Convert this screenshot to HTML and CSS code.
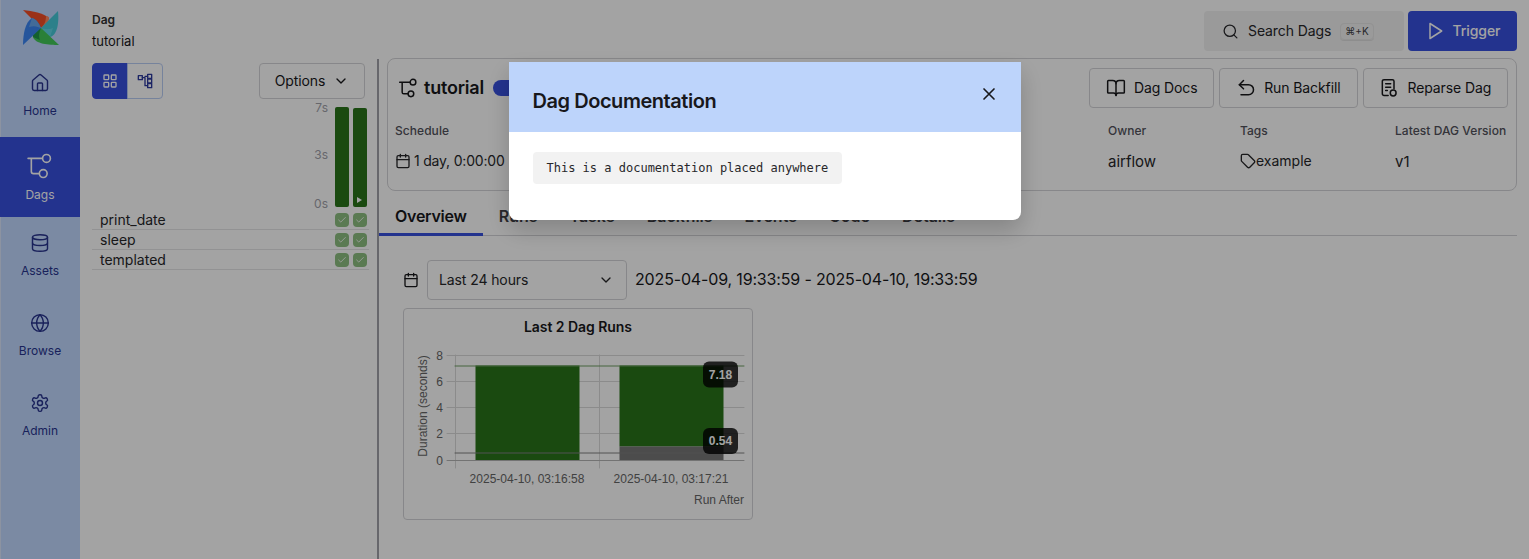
FILE: index.html
```html
<!DOCTYPE html>
<html lang="en">
<head>
  <meta charset="UTF-8">
  <meta name="viewport" content="width=device-width, initial-scale=1.0">
  <title>tutorial - Dag</title>
  <link rel="stylesheet" href="styles.css">
</head>
<body>

<div class="app">
  <nav class="sidebar">
    <div class="logo">
      <svg width="36" height="36" viewBox="0 0 36 36">
        <path fill="#f34e27" d="M18 18 0 0C10 1 20 3 26 8c-1 4-4 7-8 10z"/>
        <path fill="#ff8a63" d="M18 18c3-3 5-6 5-12 2 0 3 1 3 2 0 4-3 7-8 10z"/>
        <path fill="#45c8d8" d="M18 18 35 1c1 10 0 24-8 26-3-1-7-5-9-9z"/>
        <path fill="#5fd5e6" d="M18 18c3 1 7 2 12 0l-3 9c-4 0-7-4-9-9z"/>
        <path fill="#42c858" d="M18 18 36 35c-10 0-24-1-26-8 0-4 4-7 8-9z"/>
        <path fill="#20964a" d="M18 18c-1 3-3 7-1 12l-7-3c-1-4 3-7 8-9z"/>
        <path fill="#3a86f5" d="M18 18 0 35C0 25 2 12 9 8c4 1 7 5 9 10z"/>
        <path fill="#6aa8ee" d="M18 18c-3-1-6-3-12-1l3-9c4 1 7 5 9 10z"/>
      </svg>
    </div>
    <a class="nav-item">
      <svg class="nav-icon" viewBox="0 0 24 24"><path d="M15 21v-8a1 1 0 0 0-1-1h-4a1 1 0 0 0-1 1v8"/><path d="M3 10a2 2 0 0 1 .709-1.528l7-5.999a2 2 0 0 1 2.582 0l7 5.999A2 2 0 0 1 21 10v9a2 2 0 0 1-2 2H5a2 2 0 0 1-2-2z"/></svg>
      <span>Home</span>
    </a>
    <a class="nav-item active">
      <svg class="nav-icon dag-icon" viewBox="0 0 24 24"><path d="M1 5h13M4 5v12a2 2 0 0 0 2 2h5"/><circle cx="18" cy="5" r="3.6"/><circle cx="15" cy="19" r="3.6"/></svg>
      <span>Dags</span>
    </a>
    <a class="nav-item">
      <svg class="nav-icon" viewBox="0 0 24 24"><ellipse cx="12" cy="5" rx="9" ry="3"/><path d="M3 5V19A9 3 0 0 0 21 19V5"/><path d="M3 12A9 3 0 0 0 21 12"/></svg>
      <span>Assets</span>
    </a>
    <a class="nav-item">
      <svg class="nav-icon" viewBox="0 0 24 24"><circle cx="12" cy="12" r="10"/><path d="M12 2a14.5 14.5 0 0 0 0 20 14.5 14.5 0 0 0 0-20"/><path d="M2 12h20"/></svg>
      <span>Browse</span>
    </a>
    <a class="nav-item">
      <svg class="nav-icon" viewBox="0 0 24 24"><path d="M12.22 2h-.44a2 2 0 0 0-2 2v.18a2 2 0 0 1-1 1.73l-.43.25a2 2 0 0 1-2 0l-.15-.08a2 2 0 0 0-2.73.73l-.22.38a2 2 0 0 0 .73 2.73l.15.1a2 2 0 0 1 1 1.72v.51a2 2 0 0 1-1 1.74l-.15.09a2 2 0 0 0-.73 2.73l.22.38a2 2 0 0 0 2.73.73l.15-.08a2 2 0 0 1 2 0l.43.25a2 2 0 0 1 1 1.73V20a2 2 0 0 0 2 2h.44a2 2 0 0 0 2-2v-.18a2 2 0 0 1 1-1.73l.43-.25a2 2 0 0 1 2 0l.15.08a2 2 0 0 0 2.73-.73l.22-.39a2 2 0 0 0-.73-2.73l-.15-.08a2 2 0 0 1-1-1.74v-.5a2 2 0 0 1 1-1.74l.15-.09a2 2 0 0 0 .73-2.73l-.22-.38a2 2 0 0 0-2.73-.73l-.15.08a2 2 0 0 1-2 0l-.43-.25a2 2 0 0 1-1-1.73V4a2 2 0 0 0-2-2z"/><circle cx="12" cy="12" r="3"/></svg>
      <span>Admin</span>
    </a>
  </nav>

  <div class="main">
    <header class="topbar">
      <div class="crumbs">
        <div class="crumb-label">Dag</div>
        <div class="crumb-name">tutorial</div>
      </div>
      <div class="top-actions">
        <div class="search">
          <svg class="icon" viewBox="0 0 24 24"><circle cx="11" cy="11" r="8"/><path d="m21 21-4.3-4.3"/></svg>
          <span class="lift">Search Dags</span>
          <kbd class="kbd">⌘+K</kbd>
        </div>
        <button class="trigger">
          <svg class="icon" viewBox="0 0 24 24"><polygon points="6 3 20 12 6 21 6 3"/></svg>
          <span class="lift">Trigger</span>
        </button>
      </div>
    </header>

    <div class="content">
      <aside class="grid-panel">
        <div class="panel-tools">
          <div class="toggle">
            <span class="toggle-btn on">
              <svg class="icon-sm" viewBox="0 0 24 24"><rect width="7" height="7" x="3" y="3" rx="1"/><rect width="7" height="7" x="14" y="3" rx="1"/><rect width="7" height="7" x="14" y="14" rx="1"/><rect width="7" height="7" x="3" y="14" rx="1"/></svg>
            </span>
            <span class="toggle-btn">
              <svg class="icon-sm" viewBox="0 0 24 24"><rect width="6" height="6" x="2" y="4"/><rect width="6" height="6" x="16" y="2"/><rect width="6" height="6" x="16" y="9" /><rect width="6" height="6" x="16" y="16"/><path d="M8 7h4v12h4M12 5h4"/></svg>
            </span>
          </div>
          <button class="options"><span class="lift">Options</span>
            <svg class="icon-sm" viewBox="0 0 24 24"><path d="m6 9 6 6 6-6"/></svg>
          </button>
        </div>
        <div class="duration">
          <div class="duration-scale"><span>7s</span><span class="mid-tick">3s</span><span>0s</span></div>
          <div class="duration-bar"></div>
          <div class="duration-bar second"><i class="play-mark"></i></div>
        </div>
        <ul class="task-list">
          <li class="task-row"><span class="task-name">print_date</span><span class="check"><svg viewBox="0 0 24 24"><path d="M20 6 9 17l-5-5"/></svg></span><span class="check"><svg viewBox="0 0 24 24"><path d="M20 6 9 17l-5-5"/></svg></span></li>
          <li class="task-row"><span class="task-name">sleep</span><span class="check"><svg viewBox="0 0 24 24"><path d="M20 6 9 17l-5-5"/></svg></span><span class="check"><svg viewBox="0 0 24 24"><path d="M20 6 9 17l-5-5"/></svg></span></li>
          <li class="task-row"><span class="task-name">templated</span><span class="check"><svg viewBox="0 0 24 24"><path d="M20 6 9 17l-5-5"/></svg></span><span class="check"><svg viewBox="0 0 24 24"><path d="M20 6 9 17l-5-5"/></svg></span></li>
        </ul>
      </aside>

      <div class="divider"></div>

      <section class="detail">
        <div class="dag-card">
          <div class="dag-head">
            <div class="dag-title">
              <svg class="icon" viewBox="0 0 24 24"><path d="M2 5h12M5 5v12a2 2 0 0 0 2 2h5"/><circle cx="18" cy="5" r="3.4"/><circle cx="15.500" cy="19" r="3.4"/></svg>
              <h1>tutorial</h1>
              <span class="pill"></span>
            </div>
            <div class="dag-actions">
              <button class="btn btn-docs">
                <svg class="icon" viewBox="0 0 24 24"><path d="M12 7v14"/><path d="M3 18a1 1 0 0 1-1-1V4a1 1 0 0 1 1-1h5a4 4 0 0 1 4 4 4 4 0 0 1 4-4h5a1 1 0 0 1 1 1v13a1 1 0 0 1-1 1h-6a3 3 0 0 0-3 3 3 3 0 0 0-3-3z"/></svg>
                <span class="lift">Dag Docs</span>
              </button>
              <button class="btn btn-backfill">
                <svg class="icon" viewBox="0 0 24 24"><path d="M9 3 4 8l5 5"/><path d="M4 8h11a5.500 5.500 0 0 1 0 12H6"/></svg>
                <span class="lift">Run Backfill</span>
              </button>
              <button class="btn btn-reparse">
                <svg class="icon" viewBox="0 0 24 24"><path d="M11 21H6a2 2 0 0 1-2-2V4a2 2 0 0 1 2-2h10a2 2 0 0 1 2 2v9"/><path d="M8 7h6M8 11h6M8 15h2"/><circle cx="17" cy="18" r="3.500"/></svg>
                <span class="lift">Reparse Dag</span>
              </button>
            </div>
          </div>
          <div class="stats">
            <div class="stat">
              <div class="stat-label">Schedule</div>
              <div class="stat-value schedule"><svg class="icon-sm" viewBox="0 0 24 24"><rect x="3" y="4" width="18" height="18" rx="2"/><path d="M16 2v4M8 2v4M3 10h18"/></svg>1 day, 0:00:00</div>
            </div>
            <div class="stat">
              <div class="stat-label">Owner</div>
              <div class="stat-value">airflow</div>
            </div>
            <div class="stat">
              <div class="stat-label">Tags</div>
              <div class="stat-value tags"><svg class="icon-sm" viewBox="0 0 24 24"><path d="M12.586 2.586A2 2 0 0 0 11.172 2H4a2 2 0 0 0-2 2v7.172a2 2 0 0 0 .586 1.414l8.704 8.704a2.426 2.426 0 0 0 3.420 0l6.580-6.580a2.426 2.426 0 0 0 0-3.420z"/></svg>example</div>
            </div>
            <div class="stat">
              <div class="stat-label">Latest DAG Version</div>
              <div class="stat-value">v1</div>
            </div>
          </div>
        </div>

        <div class="tabs">
          <span class="tab active">Overview</span>
          <span class="tab">Runs</span>
          <span class="tab">Tasks</span>
          <span class="tab">Backfills</span>
          <span class="tab">Events</span>
          <span class="tab">Code</span>
          <span class="tab">Details</span>
        </div>

        <div class="overview">
          <div class="range-row">
            <svg class="icon-sm" viewBox="0 0 24 24"><rect x="3" y="4" width="18" height="18" rx="2"/><path d="M16 2v4M8 2v4M3 10h18"/></svg>
            <div class="range-select"><span class="lift">Last 24 hours</span>
              <svg class="icon-sm" viewBox="0 0 24 24"><path d="m6 9 6 6 6-6"/></svg>
            </div>
            <span class="range-text lift">2025-04-09, 19:33:59 - 2025-04-10, 19:33:59</span>
          </div>

          <div class="chart-card">
            <svg class="chart" width="350" height="212" viewBox="403 308 350 212">
              <text class="chart-title" x="578" y="332">Last 2 Dag Runs</text>
              <g class="grid">
                <path d="M447 355.500H744M447 381.500H744M447 407.500H744M447 433.500H744"/>
                <path d="M455.500 355V468M599.500 355V468"/>
              </g>
              <rect class="bar" x="475.500" y="365.500" width="104" height="95"/>
              <rect class="bar" x="619.500" y="365.500" width="104" height="81"/>
              <rect class="bar-queued" x="619.500" y="446.500" width="104" height="14"/>
              <path class="axis" d="M447 460.500H744"/>
              <path class="mean-run" d="M455 366H744"/>
              <path class="mean-queue" d="M455 453H744"/>
              <g class="tick">
                <text x="443" y="360">8</text>
                <text x="443" y="386">6</text>
                <text x="443" y="412">4</text>
                <text x="443" y="438">2</text>
                <text x="443" y="465">0</text>
              </g>
              <text class="axis-label" transform="translate(427 406) rotate(-90)">Duration (seconds)</text>
              <text class="date-tick" x="527" y="483">2025-04-10, 03:16:58</text>
              <text class="date-tick" x="671" y="483">2025-04-10, 03:17:21</text>
              <text class="run-after" x="744" y="504">Run After</text>
              <rect class="badge" x="703" y="361.500" width="35" height="26" rx="6"/>
              <text class="badge-text" x="720.500" y="379">7.18</text>
              <rect class="badge" x="703" y="428" width="35" height="26" rx="6"/>
              <text class="badge-text" x="720.500" y="445">0.54</text>
            </svg>
          </div>
        </div>
      </section>
    </div>
  </div>
</div>

<div class="overlay">
  <div class="modal">
    <div class="modal-head">
      <h2>Dag Documentation</h2>
      <svg class="modal-close" viewBox="0 0 24 24"><path d="M18 6 6 18M6 6l12 12"/></svg>
    </div>
    <div class="modal-body">
      <code class="doc-code">This is a documentation placed anywhere</code>
    </div>
  </div>
</div>

</body>
</html>
```

FILE: styles.css
```css
* { box-sizing: border-box; }
html, body { height: 100%; }
body { margin: 0; font-family: Inter, "Liberation Sans", sans-serif; font-size: 14px; color: #18181b; background-color: #ffffff; overflow: hidden; }
ul { list-style: none; margin: 0; padding: 0; }
h1, h2 { margin: 0; }
button { font-family: inherit; cursor: pointer; }
svg { fill: none; stroke: currentColor; stroke-width: 2; stroke-linecap: round; stroke-linejoin: round; flex-shrink: 0; }
.icon { width: 20px; height: 20px; stroke-width: 1.8; }
.icon-sm { width: 16px; height: 16px; }
.lift { padding-bottom: 2px; letter-spacing: -0.1px; }

.app { display: flex; height: 559px; }

/* sidebar */
.sidebar { width: 80px; flex-shrink: 0; background-color: #c0d8ff; border-left: 1px solid #dbe6fc; color: #28348f; display: flex; flex-direction: column; }
.logo { height: 57px; display: flex; padding: 10px 0 0 22px; }
.logo svg { stroke: none; }
.nav-item { height: 80px; display: flex; flex-direction: column; align-items: center; gap: 10px; padding-top: 16px; font-size: 12px; margin-left: -1px; }
.nav-item.active { background-color: #3851df; color: #ffffff; gap: 8px; }
.nav-icon { width: 20px; height: 20px; stroke-width: 1.7; }
.dag-icon { width: 26px; height: 26px; stroke-width: 1.5; }

/* top */
.main { flex: 1; min-width: 0; display: flex; flex-direction: column; padding: 0 12px; }
.topbar { height: 58px; display: flex; justify-content: space-between; padding-top: 11px; }
.crumbs { padding-top: 1px; }
.crumb-label { font-size: 12px; font-weight: 600; color: #333333; line-height: 16px; }
.crumb-name { font-size: 13px; margin-top: 3px; line-height: 20px; }
.top-actions { display: flex; gap: 4px; height: 40px; }
.search { width: 200px; background-color: #f1f1f1; border-radius: 4px; display: flex; align-items: center; padding-left: 18px; gap: 9px; color: #27272a; }
.search .icon { width: 17px; height: 17px; }
.kbd { font-family: Inter, "Liberation Sans", sans-serif; font-size: 10px; border: 1px solid #e4e4e4; border-radius: 4px; padding: 0 4px; height: 17px; line-height: 15px; color: #3f3f46; box-shadow: 0 1px 0 #dddddd; }
.trigger { width: 109px; border: none; border-radius: 4px; background-color: #3851df; color: #ffffff; font-size: 14px; font-weight: 500; display: flex; align-items: center; justify-content: center; gap: 8px; padding: 0; }

.content { flex: 1; display: flex; min-height: 0; }

/* grid panel */
.grid-panel { width: 285px; flex-shrink: 0; padding-top: 5px; }
.panel-tools { display: flex; justify-content: space-between; padding-right: 12px; }
.toggle { display: flex; height: 36px; }
.toggle-btn { width: 36px; display: flex; align-items: center; justify-content: center; border: 1px solid #b9cdf5; color: #2d3a9e; border-radius: 0 4px 4px 0; margin-left: -1px; }
.toggle-btn.on { background-color: #3851df; border-color: #3851df; color: #ffffff; border-radius: 4px 0 0 4px; margin-left: 0; }
.options { width: 106px; height: 36px; border: 1px solid #d4d4d8; border-radius: 4px; background: none; font-size: 14px; color: #18181b; display: flex; align-items: center; justify-content: center; gap: 8px; padding: 0; }
.duration { display: flex; justify-content: flex-end; height: 100px; margin-top: 8px; padding-right: 10px; gap: 4px; }
.duration-scale { display: flex; flex-direction: column; justify-content: space-between; align-items: flex-end; font-size: 12px; color: #a1a1aa; margin-right: 3px; line-height: 14px; margin-top: -6px; height: 110px; }
.mid-tick { margin-bottom: 3px; }
.duration-bar { width: 14px; height: 100px; background-color: #29741a; border-radius: 2px; position: relative; }
.duration-bar.second { height: 99px; margin-top: 1px; }
.play-mark { position: absolute; left: 4px; bottom: 4px; width: 0; height: 0; border-left: 5px solid #ffffff; border-top: 3px solid transparent; border-bottom: 3px solid transparent; }
.task-list { margin-top: 3px; margin-right: 8px; }
.task-row { height: 20px; display: flex; align-items: center; gap: 4px; padding: 0 2px 0 8px; border-bottom: 1px solid #e4e4e7; }
.task-name { flex: 1; font-size: 14px; color: #27272a; }
.check { width: 14px; height: 14px; border-radius: 4px; background-color: #8dbf80; color: #ffffff; display: flex; align-items: center; justify-content: center; }
.check svg { width: 10px; height: 10px; }

.divider { width: 2px; flex-shrink: 0; margin-top: 1px; background-color: #a1a1aa; }

/* right side */
.detail { flex: 1; min-width: 0; padding-left: 8px; }
.dag-card { height: 133px; border: 1px solid #d4d4d8; border-radius: 8px; padding: 9px 8px 0 7px; }
.dag-head { display: flex; justify-content: space-between; height: 40px; }
.dag-title { display: flex; align-items: center; gap: 6px; padding-left: 3px; }
.dag-title h1 { font-size: 18px; font-weight: 600; letter-spacing: -0.2px; padding-bottom: 2px; }
.pill { width: 40px; height: 16px; border-radius: 8px; background-color: #3851df; margin-left: 3px; }
.dag-actions { display: flex; gap: 4.67px; }
.btn { height: 40px; border: 1px solid #d4d4d8; border-radius: 4px; background: none; font-size: 14px; color: #18181b; display: flex; align-items: center; justify-content: center; gap: 8px; padding: 0; }
.btn-docs { width: 124.67px; }
.btn-backfill { width: 139.33px; }
.btn-reparse { width: 145.33px; }
.stats { display: grid; grid-template-columns: 713px 132px 155px auto; margin-top: 15px; }
.stat-label { font-size: 12px; font-weight: 500; color: #52525b; line-height: 16px; letter-spacing: 0.05px; }
.stat-value { font-size: 15px; margin-top: 11px; line-height: 24px; color: #27272a; display: flex; align-items: center; }
.schedule { font-size: 14px; gap: 3px; letter-spacing: -0.2px; margin-top: 10px; }
.tags { font-size: 14px; margin-top: 10px; }

.tabs { display: flex; height: 40px; margin: 5px 0 0 -8px; padding-left: 8px; border-bottom: 1px solid #d4d4d8; }
.tab { padding: 0 16px; font-size: 16px; font-weight: 600; line-height: 40px; height: 40px; color: #3f3f46; }
.tab.active { padding-left: 16px; margin-left: -8px; color: #18181b; border-bottom: 3px solid #3851df; letter-spacing: -0.25px; }

.overview { padding: 24px 16px 0; }
.range-row { display: flex; align-items: center; height: 40px; gap: 8px; }
.range-select { width: 200px; height: 40px; border: 1px solid #d4d4d8; border-radius: 4px; display: flex; align-items: center; justify-content: space-between; padding: 0 12px 0 11px; font-size: 14px; color: #27272a; }
.range-text { font-size: 16px; color: #18181b; letter-spacing: -0.16px; }
.chart-card { width: 350px; height: 212px; border: 1px solid #d4d4d8; border-radius: 4px; margin-top: 8px; position: relative; }
.chart { display: block; margin: -1px; stroke: none; }

/* chart parts */
.chart text { stroke: none; font-family: "Liberation Sans", Arial, sans-serif; }
.chart .chart-title { font-family: Inter, "Liberation Sans", sans-serif; font-size: 14px; font-weight: 600; letter-spacing: -0.05px; fill: #18181b; text-anchor: middle; }
.grid path { stroke: #d9d9d9; stroke-width: 1; }
.bar { fill: #29741a; stroke: none; }
.bar-queued { fill: #777777; stroke: none; }
.axis { stroke: #b4b4b4; stroke-width: 1; }
.mean-run { stroke: #6f9f62; stroke-width: 1; }
.mean-queue { stroke: #808080; stroke-width: 1; }
.tick text { font-size: 12px; fill: #666666; text-anchor: end; }
.axis-label { font-size: 12px; fill: #666666; text-anchor: middle; }
.date-tick { font-size: 12px; fill: #666666; text-anchor: middle; }
.run-after { font-size: 12px; fill: #666666; text-anchor: end; }
.badge { fill: #000000; fill-opacity: .8; stroke: none; }
.badge-text { font-size: 12px; font-weight: 700; fill: #ffffff; text-anchor: middle; }

/* documentation dialog */
.overlay { position: fixed; inset: 0; background-color: rgba(0, 0, 0, 0.36); display: flex; justify-content: center; align-items: flex-start; padding-top: 62px; }
.modal { width: 512px; height: 158px; background-color: #ffffff; border-radius: 0 0 8px 8px; box-shadow: 0 10px 24px rgba(0, 0, 0, 0.2); }
.modal-head { height: 70px; background-color: #bdd4fb; display: flex; justify-content: space-between; padding: 24px 24px 0; position: relative; }
.modal-head h2 { font-size: 20px; font-weight: 600; line-height: 30px; color: #18181b; letter-spacing: -0.45px; }
.modal-close { width: 20px; height: 20px; margin: -2px -2px 0 0; color: #18181b; stroke-width: 2; }
.modal-body { padding: 20px 24px; }
.doc-code { display: inline-block; height: 32px; line-height: 32px; padding: 0 14px; background-color: #f2f2f2; border-radius: 4px; font-family: "DejaVu Sans Mono", monospace; font-size: 12px; color: #27272a; }
```
